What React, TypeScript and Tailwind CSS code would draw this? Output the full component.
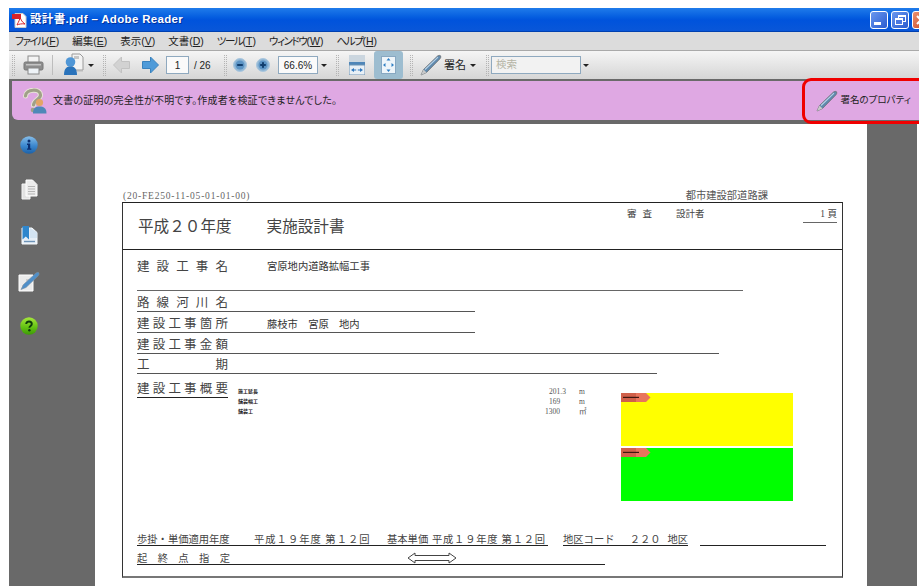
import React from "react"

const UI_FONT = "font-['Liberation_Sans','Noto_Sans_CJK_JP',sans-serif] [font-feature-settings:'palt']"
const DOC_FONT = "font-['Liberation_Serif','Noto_Sans_CJK_JP',serif] [font-feature-settings:normal]"

const Grip = ({ className = "" }: { className?: string }) => (
  <div className={`h-[21px] w-[3px] shrink-0 border-x border-dotted border-[#b4b4b4] ${className}`} />
)

const Caret = ({ className = "" }: { className?: string }) => (
  <div className={`h-0 w-0 shrink-0 border-x-[3px] border-t-[3px] border-x-transparent border-t-[#222] ${className}`} />
)

const PrintIcon = () => (
  <svg width="21" height="20" viewBox="0 0 21 20" className="shrink-0">
    <rect x="5" y="1" width="11" height="7" fill="#f4f4f4" stroke="#8a8a8a" />
    <rect x="1" y="7" width="19" height="8" rx="1.5" fill="#8d8d8d" stroke="#777" />
    <rect x="3" y="9" width="15" height="1.5" fill="#c4c4c4" />
    <rect x="5" y="13" width="11" height="6" fill="#eef3f7" stroke="#888" />
  </svg>
)

const UserDocIcon = () => (
  <svg width="21" height="24" viewBox="0 0 21 24" className="shrink-0">
    <path d="M9 1 H17 L20 4 V17 H9 Z" fill="#f3f3f3" stroke="#9a9a9a" />
    <rect x="11" y="3" width="5" height="3" fill="#c6c6c6" />
    <circle cx="7.5" cy="9" r="4.8" fill="#4f96d6" />
    <path d="M1 22 C1 15 4 13.5 7.5 13.5 S14 15 14 22 Z" fill="#2a73bb" />
    <rect x="14" y="17" width="6" height="1.5" fill="#b9b9b9" />
  </svg>
)

const Arrow = ({ dir, on }: { dir: "left" | "right"; on: boolean }) => (
  <svg width="17" height="18" viewBox="0 0 17 18" className="shrink-0">
    <path
      d={dir === "left" ? "M0.5 9 L8.5 1 V5.5 H16.5 V12.5 H8.5 V17 Z" : "M16.5 9 L8.5 1 V5.5 H0.5 V12.5 H8.5 V17 Z"}
      fill={on ? "#4f9bd9" : "#d2d2d2"}
      stroke={on ? "#3a82bd" : "#c2c2c2"}
    />
  </svg>
)

const ZoomButton = ({ plus }: { plus?: boolean }) => (
  <svg width="14" height="14" viewBox="0 0 14 14" className="shrink-0">
    <circle cx="7" cy="7" r="6.5" fill="#8fb6d6" stroke="#a9c6dd" />
    <circle cx="7" cy="7" r="4.5" fill="#5b93c4" />
    <rect x="4.2" y="6" width="5.6" height="2" fill="#123f6e" />
    {plus && <rect x="6" y="4.2" width="2" height="5.6" fill="#123f6e" />}
  </svg>
)

const FitWidthIcon = () => (
  <svg width="16" height="20" viewBox="0 0 16 20" className="shrink-0">
    <rect x="0" y="0" width="16" height="7" fill="#cbd6df" />
    <rect x="0" y="7" width="16" height="3" fill="#4f86b8" />
    <rect x="0" y="10" width="16" height="10" fill="#e9f0f6" stroke="#6e93b4" />
    <path d="M2 15 L5 13 V17 Z M14 15 L11 13 V17 Z M5 14.4 H7.2 V15.6 H5 Z M8.8 14.4 H11 V15.6 H8.8 Z" fill="#2f77bd" />
  </svg>
)

const FitPageIcon = () => (
  <svg width="15" height="18" viewBox="0 0 15 18" className="shrink-0">
    <rect x="0.5" y="0.5" width="14" height="17" fill="#eef5fa" stroke="#88a8c2" />
    <path d="M7.5 2 L9.5 4.5 H5.5 Z M7.5 16 L9.5 13.5 H5.5 Z M2 9 L4.5 7 V11 Z M13 9 L10.5 7 V11 Z" fill="#2f7fc4" />
  </svg>
)

const PenIcon = ({ w = 22 }: { w?: number }) => (
  <svg width={w} height={w} viewBox="0 0 22 22" className="shrink-0">
    <path d="M1 21 L3.5 15.5 L17.5 2 Q19.5 0.8 20.6 1.8 Q21.4 3 20 4.8 L6.5 18.5 Z" fill="#5f89ad" stroke="#6a6a6a" strokeWidth="0.7" />
    <path d="M5 15.5 L18 3.2" stroke="#b7d2e8" strokeWidth="1.1" />
    <path d="M1 21 L3.5 15.5 L6.5 18.5 Z" fill="#c9c9c9" />
  </svg>
)

const UnknownSignerIcon = () => (
  <svg width="25" height="26" viewBox="0 0 25 26" className="shrink-0">
    <path d="M2.5 8 C3 1 17 0 17.5 7 C17.5 11.5 11 11.5 10.5 17" fill="none" stroke="#e9e6d8" strokeWidth="5" strokeLinecap="round" />
    <path d="M2.5 8 C3 1 17 0 17.5 7 C17.5 11.5 11 11.5 10.5 17" fill="none" stroke="#a0a088" strokeWidth="3.2" strokeLinecap="round" />
    <circle cx="10" cy="22" r="2.3" fill="#a0a088" />
    <circle cx="16.5" cy="14.5" r="3.6" fill="#e3a566" />
    <path d="M10 25.5 C10 20 12.5 18.5 16.5 18.5 S23.5 20 23.5 25.5 Z" fill="#4f88b8" />
  </svg>
)

const InfoIcon = () => (
  <svg width="18" height="18" viewBox="0 0 18 18">
    <defs>
      <linearGradient id="infoFill" x1="0" y1="0" x2="0" y2="1">
        <stop offset="0" stopColor="#86bde8" />
        <stop offset="0.55" stopColor="#3b87cf" />
        <stop offset="1" stopColor="#1d62a8" />
      </linearGradient>
    </defs>
    <circle cx="9" cy="9" r="8.7" fill="url(#infoFill)" />
    <circle cx="9" cy="5" r="1.5" fill="#0b2f72" />
    <path d="M7 7.6 H10.2 V12.4 H11.3 V13.8 H7 V12.4 H8 V9 H7 Z" fill="#0b2f72" />
  </svg>
)

const PagesIcon = () => (
  <svg width="17" height="21" viewBox="0 0 17 21">
    <path d="M1 5 H9 V20 H1 Z" fill="#e2e2e2" stroke="#f6f6f6" />
    <path d="M5 1 H11.5 L16 5.5 V17 H5 Z" fill="#ececec" stroke="#fff" />
    <path d="M7 7.5 H14 M7 10 H14 M7 12.5 H14 M7 15 H14" stroke="#b5b5b5" />
  </svg>
)

const BookmarkIcon = () => (
  <svg width="17" height="20" viewBox="0 0 17 20">
    <path d="M1 3 H11 L16 7.5 V19 H1 Z" fill="#e6eef6" stroke="#f8fbfd" />
    <path d="M1.5 1 H8 V14.5 L4.8 11.5 L1.5 14.5 Z" fill="#2f86cc" />
    <path d="M9 3 L16 7.5 V13 H9 Z" fill="#d3e3f1" />
    <path d="M3 16.5 H14" stroke="#6d93b7" strokeWidth="1.4" />
  </svg>
)

const SignIcon = () => (
  <svg width="22" height="21" viewBox="0 0 22 21">
    <path d="M1 4 H15 V20 H1 Z" fill="#ebebeb" stroke="#fff" />
    <path d="M8 9 H13 M8 12 H11 M4 15 H9" stroke="#b2b2b2" />
    <path d="M3 18.5 L5.5 13.5 L18 2 Q20.5 0.5 21 2 Q21.5 3.5 20 5 L8 16.5 Z" fill="#4f8fc9" stroke="#7c8ea0" strokeWidth="0.6" />
  </svg>
)

const HelpIcon = () => (
  <svg width="18" height="18" viewBox="0 0 18 18">
    <defs>
      <linearGradient id="helpFill" x1="0" y1="0" x2="0" y2="1">
        <stop offset="0" stopColor="#a6e63c" />
        <stop offset="0.6" stopColor="#5fc010" />
        <stop offset="1" stopColor="#3e9a08" />
      </linearGradient>
    </defs>
    <circle cx="9" cy="9" r="8.7" fill="url(#helpFill)" />
    <path d="M6.2 7 C6.2 3.6 11.8 3.6 11.8 7 C11.8 9 9.4 9 9.4 10.8" fill="none" stroke="#0d3d0a" strokeWidth="1.9" />
    <circle cx="9.4" cy="13.2" r="1.2" fill="#0d3d0a" />
  </svg>
)

// katakana menu names run tighter than the kanji ones
const Menu = ({ label, hot, kana }: { label: string; hot: string; kana?: boolean }) => (
  <span className="whitespace-nowrap">
    <span className={kana ? "tracking-[-1.4px]" : ""}>{label}</span>(<span className="underline">{hot}</span>)
  </span>
)

// form labels are spread evenly over the label column, like the printed sheet
const Spread = ({ text, className = "" }: { text: string; className?: string }) => (
  <div className={`flex justify-between ${className}`}>
    {Array.from(text).map((c, i) => (
      <span key={i}>{c}</span>
    ))}
  </div>
)

const FormRow = ({
  label,
  value,
  width,
  height,
}: {
  label: string
  value?: string
  width: string
  height: string
}) => (
  <div className={`flex items-end border-b border-[#555] ${width} ${height}`}>
    <Spread text={label} className="w-[91px] text-[12.5px] leading-[15px] text-[#444]" />
    {value && <div className="ml-[39px] text-[10.3px] leading-[15px] whitespace-pre text-[#333]">{value}</div>}
  </div>
)

const Tag = () => (
  <svg width="30" height="9" viewBox="0 0 30 9" className="block">
    <path d="M0 0 H25 L29.5 4.5 L25 9 H0 Z" fill="#e8755c" />
    <rect x="0" y="0" width="15" height="9" fill="#d0604a" />
    <rect x="2" y="3.8" width="16" height="1.2" fill="#3c1710" />
  </svg>
)

const Sheet = () => (
  <div className={`${DOC_FONT} flex h-[462px] w-[772px] shrink-0 flex-col bg-white pt-[66px] pl-[27px]`}>
    <div className="flex h-[12px] w-[646px] items-center justify-between pl-px text-[9.5px] text-[#666]">
      <span className="tracking-[0.8px]">(20-FE250-11-05-01-01-00)</span>
      <span className="text-[10.3px] text-[#555]">都市建設部道路課</span>
    </div>

    <div className="flex h-[376px] w-[721px] flex-col border-x border-t border-b-2 border-x-[#333] border-t-[#222] border-b-[#777]">
      <div className="flex h-[47px] shrink-0 border-b border-[#222]">
        <div className="flex items-center gap-[35px] pt-[1px] pl-[15px] text-[15.6px] whitespace-nowrap text-[#444]">
          <span>平成２０年度</span>
          <span>実施設計書</span>
        </div>
        <div className="ml-auto flex pt-[5px] pr-[5px] text-[9.5px] leading-[12px] text-[#444]">
          <Spread text="審査" className="w-[25px]" />
          <span className="ml-[24px] w-[30px]">設計者</span>
          <div className="ml-[97px] h-[15px] w-[34px] border-b border-[#666] text-right">1 頁</div>
        </div>
      </div>

      <div className="flex flex-1 flex-col pl-[14px]">
        <div className="flex h-[41px] w-[606px] shrink-0 items-start border-b border-[#666] pt-[9px]">
          <Spread text="建設工事名" className="w-[91px] text-[12.5px] leading-[16px] text-[#444]" />
          <div className="ml-[39px] text-[10.3px] leading-[16px] text-[#333]">宮原地内道路拡幅工事</div>
        </div>
        <FormRow label="路線河川名" width="w-[338px]" height="h-[21px]" />
        <FormRow label="建設工事箇所" value="藤枝市　宮原　地内" width="w-[338px]" height="h-[21px]" />
        <FormRow label="建設工事金額" width="w-[582px]" height="h-[21px]" />
        <FormRow label="工　　期" width="w-[520px]" height="h-[20px]" />

        <div className="flex h-[159px] shrink-0">
          <div className="mt-[8px] h-[16px] w-[91px] border-b border-[#222]">
            <Spread text="建設工事概要" className="text-[12.5px] leading-[15px] text-[#444]" />
          </div>
          <div className="mt-[13px] ml-[10px] w-[20px] text-[5px] leading-[10px] font-bold text-[#222]">
            <div>施工延長</div>
            <div>舗装幅工</div>
            <div>舗装工</div>
          </div>
          <div className="mt-[13px] ml-[287px] w-[24px] text-[7.5px] leading-[10px] text-[#555]">
            <div className="pl-[4px]">201.3</div>
            <div className="pl-[4px]">169</div>
            <div>1300</div>
          </div>
          <div className="mt-[13px] ml-[10px] w-[10px] text-[7.5px] leading-[10px] text-[#555]">
            <div>m</div>
            <div>m</div>
            <div>㎡</div>
          </div>
          <div className="mt-[19px] ml-[32px] w-[172px]">
            <div className="h-[53px] bg-[#ffff00]">
              <Tag />
            </div>
            <div className="mt-[2px] h-[53px] bg-[#00ff00]">
              <Tag />
            </div>
          </div>
        </div>

        <div className="flex h-[13px] shrink-0 items-end text-[10.3px] leading-[11px] whitespace-pre text-[#444]">
          <div className="flex h-full w-[411px] items-end border-b border-[#222]">
            <span className="w-[117px]">歩掛・単価適用年度</span>
            <span className="w-[133px] tracking-[1px]">平成１９年度 第１２回</span>
            <span className="w-[45px]">基本単価</span>
            <span className="tracking-[0.75px]">平成１９年度 第１２回</span>
          </div>
          <div className="ml-[15px] flex h-full w-[125px] items-end border-b border-[#222]">
            <span className="w-[67px]">地区コード</span>
            <span className="w-[38px]">２２０</span>
            <span>地区</span>
          </div>
          <div className="ml-[12px] h-full w-[126px] border-b border-[#222]" />
        </div>
        <div className="flex h-[19px] w-[468px] shrink-0 items-end border-b border-[#222] text-[10.3px] leading-[11px] text-[#444]">
          <Spread text="起終点指定" className="w-[93px]" />
          <svg width="50" height="12" viewBox="0 0 50 12" className="ml-[177px] shrink-0">
            <path d="M1 6 L8 1 V3.5 H42 V1 L49 6 L42 11 V8.5 H8 V11 Z" fill="#fff" stroke="#444" />
          </svg>
        </div>
      </div>
    </div>
  </div>
)

export default function App() {
  return (
    <div className={`${UI_FONT} h-[586px] w-[919px] overflow-hidden bg-white pt-2 pl-[9px]`}>
      <div className="flex h-[24px] items-center bg-gradient-to-b from-[#1f7bea] via-[#0053dc] to-[#0a57d8] pl-[3px] shadow-[inset_0_-1px_0_#0040b0]">
        <svg width="15" height="15" viewBox="0 0 15 15" className="shrink-0">
          <path d="M3 0.5 H11 L14 3.5 V14.5 H3 Z" fill="#fff" stroke="#ccc" />
          <rect x="0" y="1" width="9" height="5" fill="#d8232a" />
          <path d="M5 12 C7 8 8 6 8 4 C9 7 10 9 13 11 C10 10.5 7 11 5 12 Z" fill="none" stroke="#d8232a" />
        </svg>
        <span className="ml-[3px] text-[11.5px] font-bold tracking-[0.33px] whitespace-nowrap text-white [font-feature-settings:normal] [text-shadow:1px_1px_0_#00309c]">
          設計書.pdf – Adobe Reader
        </span>
        <div className="mr-[-11px] ml-auto flex gap-[3px]">
          <div className="flex h-[18px] w-[18px] items-end rounded-[3px] border border-white bg-gradient-to-br from-[#6a97ee] to-[#2a5bd0] p-[3px]">
            <div className="h-[3px] w-[7px] bg-white" />
          </div>
          <div className="relative h-[18px] w-[18px] rounded-[3px] border border-white bg-gradient-to-br from-[#6a97ee] to-[#2a5bd0]">
            <div className="absolute top-[3px] left-[6px] h-[7px] w-[8px] border border-t-2 border-white" />
            <div className="absolute top-[6px] left-[3px] h-[7px] w-[8px] border border-t-2 border-white bg-[#4a78e0]" />
          </div>
          <div className="flex h-[18px] w-[18px] items-center justify-center rounded-[3px] border border-white bg-gradient-to-br from-[#ea9170] to-[#c9401c]">
            <svg width="10" height="10" viewBox="0 0 10 10">
              <path d="M1 1 L9 9 M9 1 L1 9" stroke="#fff" strokeWidth="2" />
            </svg>
          </div>
        </div>
      </div>

      <div className="flex h-[18px] items-center gap-[13px] bg-[#dcdcdc] pl-[6px] text-[10.5px] leading-none text-[#222]">
        <Menu label="ファイル" hot="F" kana />
        <Menu label="編集" hot="E" />
        <Menu label="表示" hot="V" />
        <Menu label="文書" hot="D" />
        <Menu label="ツール" hot="T" kana />
        <Menu label="ウィンドウ" hot="W" kana />
        <Menu label="ヘルプ" hot="H" kana />
      </div>

      <div className="flex h-[29px] items-center border-t border-[#a9a9a9] bg-gradient-to-b from-[#f5f5f5] to-[#d6d6d6] pl-[3px] text-[10.5px] text-[#222]">
        <Grip />
        <div className="ml-[8px]"><PrintIcon /></div>
        <div className="ml-[8px] h-[20px] w-px bg-[#bdbdbd]" />
        <div className="ml-[10px]"><UserDocIcon /></div>
        <Caret className="ml-[4px]" />
        <Grip className="ml-[9px]" />
        <div className="ml-[7px]"><Arrow dir="left" on={false} /></div>
        <div className="ml-[12px]"><Arrow dir="right" on /></div>
        <div className="ml-[7px] flex h-[18px] w-[23px] shrink-0 items-center justify-center border border-[#8fa9bf] bg-[#fafafa] text-[10px]">1</div>
        <span className="ml-[5px] w-[21px] shrink-0 text-[10px] whitespace-nowrap">/ 26</span>
        <Grip className="ml-[9px]" />
        <div className="ml-[6px]"><ZoomButton /></div>
        <div className="ml-[9px]"><ZoomButton plus /></div>
        <div className="ml-[8px] flex h-[18px] w-[40px] shrink-0 items-center justify-center border border-[#8fa9bf] bg-[#fafafa] text-[10px]">66.6%</div>
        <Caret className="ml-[3px]" />
        <Grip className="ml-[9px]" />
        <div className="ml-[10px]"><FitWidthIcon /></div>
        <div className="ml-[9px] flex h-[28px] w-[29px] shrink-0 items-center justify-center rounded-[3px] bg-[#9dbdd0]">
          <FitPageIcon />
        </div>
        <Grip className="ml-[7px]" />
        <div className="ml-[7px]"><PenIcon /></div>
        <span className="ml-[2px] w-[22px] shrink-0 text-[11px] whitespace-nowrap">署名</span>
        <Caret className="ml-[4px]" />
        <Grip className="ml-[10px]" />
        <div className="ml-[2px] flex h-[18px] w-[90px] shrink-0 items-center border border-[#8fa9bf] bg-[#f2f2f2] pl-[4px] text-[10.5px] text-[#b5b5a5]">検索</div>
        <Caret className="ml-[2px]" />
      </div>

      <div className="relative flex h-[45px] border-t-2 border-[#6a6a6a] bg-[#696969] pb-[4px] pl-[3px]">
        <div className="flex flex-1 items-center rounded-bl-[6px] bg-[#dfa8e3] pl-[11px]">
          <UnknownSignerIcon />
          <span className="ml-[5px] text-[10px] tracking-[0.2px] whitespace-nowrap text-[#222]">
            文書の証明の完全性が不明です。作成者を検証できませんでした。
          </span>
          <div className="ml-auto flex items-center pr-[8px]">
            <PenIcon />
            <span className="ml-[3px] text-[9.5px] whitespace-nowrap text-[#222]">署名のプロパティ</span>
          </div>
        </div>
        <div className="absolute top-[-3px] right-[-8px] h-[46px] w-[125px] rounded-[9px] border-[3px] border-[#f00000]" />
      </div>

      <div className="mr-[2px] flex h-[462px] bg-[#696969]">
        <div className="flex w-[86px] shrink-0 flex-col items-center pt-[12px] pr-[46px]">
          <InfoIcon />
          <div className="mt-[25px]"><PagesIcon /></div>
          <div className="mt-[25px]"><BookmarkIcon /></div>
          <div className="mt-[26px]"><SignIcon /></div>
          <div className="mt-[25px]"><HelpIcon /></div>
        </div>
        <Sheet />
      </div>
    </div>
  )
}
